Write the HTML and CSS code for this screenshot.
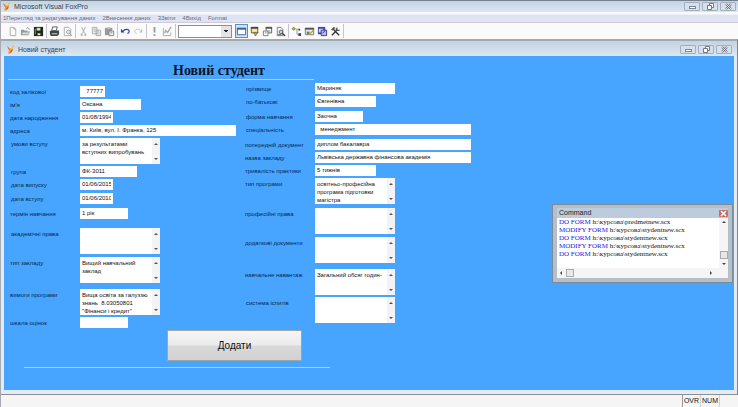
FILE: index.html
```
<!DOCTYPE html>
<html lang="uk">
<head>
<meta charset="utf-8">
<title>Microsoft Visual FoxPro</title>
<link rel="stylesheet" href="styles.css">
</head>
<body>
<svg class="defs" aria-hidden="true">
  <symbol id="fox" viewBox="0 0 9 9"><path d="M1 1l3 3 4-4-2 6-4 3 1-4z" fill="#f5a623"/><path d="M1 1l3 3-1 1zM5 5l2-1-1 3-3 2z" fill="#d9622b"/><path d="M5 3l2-2-1 3z" fill="#ffe34d"/></symbol>
  <symbol id="min" viewBox="0 0 9 7"><rect x="1.5" y="3.5" width="6" height="2" fill="#fff" stroke="#7d8691"/></symbol>
  <symbol id="restore" viewBox="0 0 9 7"><path d="M3.500 2.500v-2h4v4h-2M1.500 2.500h4v4h-4z" fill="#fff" stroke="#6f7782"/></symbol>
  <symbol id="close" viewBox="0 0 9 7"><path d="M2 1l5 5M7 1l-5 5" stroke="#6f7782" stroke-width="2"/><path d="M2 1l5 5M7 1l-5 5" stroke="#fff" stroke-width=".7"/></symbol>
  <symbol id="scroll" viewBox="0 0 8 26"><path d="M2 7l2-2 2 2zM2 20l2 2 2-2z" fill="#555"/></symbol>
</svg>
<div class="app">
  <header class="titlebar app-title">
    <svg class="logo"><use href="#fox"/></svg>
    <h1>Microsoft Visual FoxPro</h1>
    <div class="winbtns">
      <button aria-label="Згорнути"><svg><use href="#min"/></svg></button>
      <button aria-label="Відновити"><svg><use href="#restore"/></svg></button>
      <button aria-label="Закрити"><svg><use href="#close"/></svg></button>
    </div>
  </header>
  <nav class="menu">
    <button>1Перегляд та редагування даних</button>
    <button>2Внесення даних</button>
    <button>3Звіти</button>
    <button>4Вихід</button>
    <button>Format</button>
  </nav>
  <div class="toolbar" role="toolbar">
    <div class="tools">
      <button aria-label="Новий"><svg viewBox="0 0 12 12"><path d="M3.500 1.500h4l2 2v7h-6zM7.500 1.500v2h2" fill="#fff" stroke="#aaa"/></svg></button>
      <button aria-label="Відкрити"><svg viewBox="0 0 12 12"><path d="M1 10V4h3l1 1h3v1h3L9 10z" fill="#999"/><path d="M3 7h7l-1 2H2z" fill="#ddd"/><path d="M7 3c1-2 3-1 3 1" fill="none" stroke="#888"/></svg></button>
      <button aria-label="Зберегти"><svg viewBox="0 0 12 12"><path d="M1 1h10v10H1z" fill="#1d2b16"/><path d="M4 2h4v3H4z" fill="#d5dccb"/><path d="M5 8h3v2H5z" fill="#eee"/><path d="M2 3h1v6H2z" fill="#879750"/></svg></button>
    </div>
    <div class="tools">
      <button aria-label="Друк"><svg viewBox="0 0 12 12"><path d="M2 5h9v4l-2 2H2L1 9V6z" fill="#444"/><path d="M4 1h5L8 5H3z" fill="#fff" stroke="#555"/><path d="M3 8h6v1H3z" fill="#ddd"/></svg></button>
      <button aria-label="Перегляд"><svg viewBox="0 0 12 12"><path d="M2.500 1.500h5l2 2v7h-7z" fill="#fff" stroke="#aaa"/><circle cx="7" cy="6.500" r="2" fill="#eee" stroke="#999"/><path d="M8 8l3 3" stroke="#999"/></svg></button>
    </div>
    <div class="tools">
      <button aria-label="Вирізати"><svg viewBox="0 0 12 12"><path d="M4 1l3 7M8 1L5 8" stroke="#aaa"/><path d="M3.500 8.500h1v2h-1zM7.500 8.500h1v2h-1z" fill="none" stroke="#aaa"/></svg></button>
      <button aria-label="Копіювати"><svg viewBox="0 0 12 12"><path d="M1.500 1.500h5v7h-5zM5.500 4.500h5v6h-5z" fill="#eee" stroke="#aaa"/><path d="M7 6.500h2M7 8.500h2M3 3.500h2M3 5.500h2" stroke="#aaa"/></svg></button>
      <button aria-label="Вставити"><svg viewBox="0 0 12 12"><path d="M1 2h8v8H1z" fill="#999"/><path d="M3 1h4v2H3z" fill="#ccc"/><path d="M5.500 5.500h5v5h-5z" fill="#eee" stroke="#888"/><path d="M7 7.500h2" stroke="#888"/></svg></button>
    </div>
    <div class="tools">
      <button aria-label="Скасувати"><svg viewBox="0 0 12 12"><path d="M3 6c2-3 7-3 7 0 0 1-1 2-2 2" fill="none" stroke="#3b3f94" stroke-width="1.300"/><path d="M1 3v4h4z" fill="#3b3f94"/></svg></button>
      <button aria-label="Повторити"><svg viewBox="0 0 12 12"><path d="M8 5c-2-2-6-2-6 1 0 1 1 2 2 2" fill="none" stroke="#bbb"/><path d="M10 3v4H7z" fill="#bbb"/></svg></button>
    </div>
    <div class="tools">
      <button aria-label="Виконати"><svg viewBox="0 0 12 12"><path d="M5 1h2v6H5zM5 9h2v2H5z" fill="#999"/></svg></button>
      <button aria-label="Змінити"><svg viewBox="0 0 12 12"><path d="M1.500 2v8.500h8V7" fill="none" stroke="#aaa"/><path d="M3 8l1-3 2 2 4-6" fill="none" stroke="#aaa" stroke-width="1.500"/></svg></button>
    </div>
    <select class="dblist" aria-label="База даних"><option></option></select>
    <div class="tools">
      <button class="on" aria-label="Командне вікно"><svg viewBox="0 0 12 12"><path d="M1.500 2.500h9v7h-9z" fill="#fff" stroke="#35609a"/><path d="M1 2h10v2H1z" fill="#35609a"/></svg></button>
      <button aria-label="Сеанс даних"><svg viewBox="0 0 12 12"><path d="M2.500 1.500h7v6h-7z" fill="#ffe97a" stroke="#555"/><path d="M2 1h8v2H2z" fill="#34407f"/><path d="M5 7h5l-3 4z" fill="#c4a12b" stroke="#555" stroke-width=".6"/></svg></button>
      <button aria-label="Властивості"><svg viewBox="0 0 12 12"><path d="M4.500 1.500h6v6h-6z" fill="#fff" stroke="#555"/><path d="M4 1h7v2H4z" fill="#555"/><path d="M1.500 5.500h5v5h-5z" fill="#fff" stroke="#777"/><path d="M6 5.500h3M3 7.500h2" stroke="#777"/></svg></button>
      <button aria-label="Огляд документа"><svg viewBox="0 0 12 12"><path d="M2.500 1.500h4l2 2v7h-6z" fill="#fff" stroke="#777"/><circle cx="6.500" cy="6.500" r="2" fill="#bde" stroke="#555"/><path d="M8 8l3 3" stroke="#444" stroke-width="1.500"/><path d="M3 9.500h4" stroke="#555"/></svg></button>
    </div>
    <div class="tools">
      <button aria-label="Оглядач класів"><svg viewBox="0 0 12 12"><path d="M1 3l2-2 2 2-2 2z" fill="#b5b02a" stroke="#555" stroke-width=".5"/><path d="M5 3.500h3M6.500 4v5H8" fill="none" stroke="#999"/><path d="M8 3h2v2H8zM8 8h3v3H8z" fill="#34407f"/></svg></button>
      <button aria-label="Оглядач об’єктів"><svg viewBox="0 0 12 12"><path d="M1.500 2.500h9v7h-9z" fill="#eee" stroke="#777"/><path d="M1 2h10v2H1z" fill="#555"/><path d="M3 6h3v3H3z" fill="#5a8a57"/><path d="M6 8l4-4 1 1-4 4z" fill="#c99c21"/></svg></button>
      <button aria-label="Форма"><svg viewBox="0 0 12 12"><path d="M1 1h8v8H1z" fill="#4545a5"/><path d="M2 3h5v4H2z" fill="#d7d7f5"/><path d="M4.500 4.500h6v6h-6z" fill="#b9b9e8" stroke="#34348d"/><path d="M6 8l3-3" stroke="#34348d"/></svg></button>
      <button aria-label="Інструменти"><svg viewBox="0 0 12 12"><path d="M2 10l6-6M3 3l7 7" stroke="#333" stroke-width="1.500"/><path d="M1 4l3-3 2 1-3 3zM8 1v3h3l-1 1.500H7L6 3z" fill="#555"/></svg></button>
    </div>
  </div>

  <main class="window">
    <div class="titlebar form-title">
      <svg class="logo"><use href="#fox"/></svg>
      <span>Новий студент</span>
      <div class="winbtns">
        <button aria-label="Згорнути"><svg><use href="#min"/></svg></button>
        <button aria-label="Відновити"><svg><use href="#restore"/></svg></button>
        <button aria-label="Закрити"><svg><use href="#close"/></svg></button>
      </div>
    </div>
    <form class="form">
      <h2>Новий студент</h2>
      <div class="columns">
        <div class="col left">
          <div class="row"><label for="a1">код залікової</label><input id="a1" class="w25 num" value="77777"></div>
          <div class="row"><label for="a2">ім'я</label><input id="a2" class="w61" value="Оксана"></div>
          <div class="row"><label for="a3">дата народження</label><input id="a3" class="w33" value="01/08/1994"></div>
          <div class="row"><label for="a4">адреса</label><input id="a4" class="w156" value="м. Київ, вул. І. Франка, 125"></div>
          <div class="row in"><label for="a5">умови вступу</label><div class="memo"><textarea id="a5">за результатами
вступних випробувань</textarea><svg><use href="#scroll"/></svg></div></div>
          <div class="row in"><label for="a6">група</label><input id="a6" class="w57" value="ФК-3011"></div>
          <div class="row in"><label for="a7">дата випуску</label><input id="a7" class="w33" value="01/06/2015"></div>
          <div class="row in g3"><label for="a8">дата вступу</label><input id="a8" class="w33" value="01/06/2010"></div>
          <div class="row g4"><label for="a9">термін навчання</label><input id="a9" class="w48" value="1 рік"></div>
          <div class="row in g9"><label for="a10">академічні права</label><div class="memo"><textarea id="a10"></textarea><svg><use href="#scroll"/></svg></div></div>
          <div class="row g3"><label for="a11">тип закладу</label><div class="memo"><textarea id="a11">Вищий навчальний
заклад</textarea><svg><use href="#scroll"/></svg></div></div>
          <div class="row g6"><label for="a12">вимоги програми</label><div class="memo"><textarea id="a12">Вища освіта за галуззю
знань  8.03050801
"Фінанси і кредит"</textarea><svg><use href="#scroll"/></svg></div></div>
          <div class="row"><label for="a13">шкала оцінок</label><input id="a13" class="w48"></div>
        </div>
        <div class="col right">
          <div class="row in"><label for="b1">прізвище</label><input id="b1" class="w80" value="Мариняк"></div>
          <div class="row in"><label for="b2">по-батькові</label><input id="b2" class="w61" value="Євгенівна"></div>
          <div class="row in g4"><label for="b3">форма навчання</label><input id="b3" class="w48" value="Заочна"></div>
          <div class="row in"><label for="b4">спеціальність</label><input id="b4" class="w156" value="  менеджмент"></div>
          <div class="row g4"><label for="b5">попередній документ</label><input id="b5" class="w156" value="диплом бакалавра"></div>
          <div class="row"><label for="b6">назва закладу</label><input id="b6" class="w156" value="Львівська державна фінансова академія"></div>
          <div class="row"><label for="b7">тривалість практики</label><input id="b7" class="w61" value="5 тижнів"></div>
          <div class="row"><label for="b8">тип програми</label><div class="memo"><textarea id="b8">освітньо-професійна
програма підготовки
магістра</textarea><svg><use href="#scroll"/></svg></div></div>
          <div class="row g4"><label for="b9">професійні права</label><div class="memo"><textarea id="b9"></textarea><svg><use href="#scroll"/></svg></div></div>
          <div class="row g3"><label for="b10">додаткові документи</label><div class="memo"><textarea id="b10"></textarea><svg><use href="#scroll"/></svg></div></div>
          <div class="row g6"><label for="b11">навчальне навантаж</label><div class="memo"><textarea id="b11">Загальний обсяг годин-</textarea><svg><use href="#scroll"/></svg></div></div>
          <div class="row in"><label for="b12">система іспитів</label><div class="memo"><textarea id="b12"></textarea><svg><use href="#scroll"/></svg></div></div>
        </div>
      </div>
      <button type="button" class="add">Додати</button>
      <hr>
    </form>
    <section class="command">
      <div class="cmd-title"><span>Command</span><button aria-label="Закрити"><svg viewBox="0 0 9 7"><path d="M2 1l5 5M7 1l-5 5" stroke="#fff" stroke-width="1.500"/></svg></button></div>
      <div class="cmd-body">
        <div class="cmd-text">
          <p><b>DO FORM</b> h:\курсова\predmetnew.scx</p>
          <p><b>MODIFY FORM</b> h:\курсова\stydentnew.scx</p>
          <p><b>DO FORM</b> h:\курсова\stydentnew.scx</p>
          <p><b>MODIFY FORM</b> h:\курсова\stydentnew.scx</p>
          <p><b>DO FORM</b> h:\курсова\stydentnew.scx</p>
        </div>
        <div class="vbar"><svg viewBox="0 0 8 5"><path d="M2 4l2-2 2 2z"/></svg><i></i><svg viewBox="0 0 8 5"><path d="M2 1l2 2 2-2z"/></svg></div>
        <div class="hbar"><svg viewBox="0 0 5 8"><path d="M3 2L1 4l2 2z"/></svg><i></i><svg class="end" viewBox="0 0 5 8"><path d="M1 2l2 2-2 2z"/></svg></div>
      </div>
    </section>
  </main>
  <footer class="status"><span>OVR</span><span>NUM</span></footer>
</div>
</body>
</html>
```
FILE: styles.css
```
* { box-sizing: border-box; }
body { margin: 0; font-family: "Liberation Sans", Arial, sans-serif; font-size: 6px; color: #111; }
h1, h2, p { margin: 0; font-weight: normal; }
button { font: inherit; color: inherit; padding: 0; border: 0; background: none; }
svg { display: block; }
.defs { position: absolute; width: 0; height: 0; }
.app { display: flex; flex-direction: column; min-height: 100vh; background: #f5f5f5; border-left: 1px solid #a9a9b2; }

.titlebar { display: flex; align-items: center; gap: 3px; font-size: 7px; color: #35404c; }
.titlebar > h1, .titlebar > span { flex: 1; }
.logo { width: 9px; height: 9px; }
.app-title { height: 12px; padding: 0 2px 0 1px; border-top: 1px solid #75808d; background: linear-gradient(#c4d4e5, #dae6f2); }
.app-title h1 { font-size: 7px; line-height: 11px; }
.winbtns { display: flex; gap: 2px; }
.winbtns button { width: 16px; height: 9px; display: grid; place-items: center; border: 1px solid #a2afbf; border-radius: 1px; background: #d5e0ec; }
.winbtns svg { width: 9px; height: 7px; }

.menu { display: flex; gap: 7px; height: 11px; padding: 2px 2px 0; background: linear-gradient(#fafbfe 2px, #dfe4f4 3px); border-bottom: 1px solid #cfcbd6; font-size: 6px; line-height: 8px; color: #666b7a; }

.toolbar { display: flex; align-items: center; height: 16px; padding-left: 5px; background: #fafafa; }
.tools { display: flex; border-right: 1px solid #c5c5ca; margin-right: 1px; padding-right: 1px; }
.tools button { width: 13px; height: 14px; display: grid; place-items: center; }
.tools svg { width: 11px; height: 11px; }
.tools .on { border: 1px solid #5590cf; background: #cfe4fa; }
.dblist { appearance: none; width: 54px; height: 13px; margin: 0 3px 0 1px; border: 1px solid #8e8e8e; border-radius: 0; font-size: 6px;
  background: conic-gradient(from 315deg at 50% 100%, #222 90deg, transparent 0) right 3px center / 4px 2px no-repeat, linear-gradient(#e4e4e4, #e4e4e4) right / 10px 100% no-repeat, #fff; }

.window { position: relative; flex: 1; display: flex; flex-direction: column; border-top: 2px solid #a3a9b0; border-right: 1px solid #80848c; border-bottom: 1px solid #8d8f96; background: #e2ebf6; padding: 0 3px 4px; }
.form-title { height: 15px; margin: 0 -3px; padding: 1px 5px 0 5px; background: linear-gradient(#c4d3e2, #dce8f3); }
.form { flex: 1; background: #47a5ff; padding: 7px 4px 16px; }
h2 { width: 306px; height: 17px; padding-left: 165px; border-bottom: 1px solid #a9d3f5; font: bold 14px/16px "Liberation Serif", serif; color: #0a1430; }
.columns { display: flex; }
.col { display: flex; flex-direction: column; }
.left { padding-top: 6px; width: 236px; }
.right { padding-top: 3px; }
.row { display: flex; align-items: flex-start; margin-top: 2px; }
.col .row:first-child { margin-top: 0; }
.row.g3 { margin-top: 3px; }
.row.g4 { margin-top: 4px; }
.row.g6 { margin-top: 6px; }
.row.g9 { margin-top: 9px; }
.row label { flex: none; width: 72px; height: 11px; padding-left: 2px; line-height: 12px; white-space: nowrap; color: #06294f; }
.row.in label { padding-left: 3px; }
.right .row label { width: 71px; padding-left: 1px; }
.right .row.in label { padding-left: 2px; }
input, textarea { display: block; font: inherit; color: #111; border: 0; border-radius: 0; margin: 0; background: #fff; }
input { height: 11px; padding: 0 2px; line-height: 11px; }
.num { text-align: right; }
.w25 { width: 25px; }
.w33 { width: 33px; }
.w48 { width: 48px; }
.w57 { width: 57px; }
.w61 { width: 61px; }
.w80 { width: 80px; }
.w156 { width: 156px; }
.memo { display: flex; width: 80px; height: 26px; background: #fff; }
.memo textarea { flex: 1; min-width: 0; height: 26px; padding: 2px 0 0 2px; line-height: 8px; resize: none; overflow: hidden; white-space: pre; }
.memo svg { flex: none; width: 8px; height: 26px; background: #f3f3f5; }
.add { display: block; width: 135px; height: 31px; margin: 2px 0 6px 159px; border: 1px solid #9fa4aa; background: linear-gradient(#f6f6f6, #ebebeb 48%, #d9d9d9 52%, #d2d2d2); font-size: 10px; color: #111; }
hr { width: 306px; margin: 0 0 0 16px; border: 0; border-top: 1px solid #a9d3f5; }

.command { position: absolute; right: 4px; top: 163px; width: 181px; padding: 3px 4px 4px; background: #b4bfca; border: 1px solid #7d8b99; }
.cmd-title { display: flex; justify-content: space-between; align-items: center; height: 10px; padding-left: 2px; font-size: 7px; line-height: 10px; color: #222; background: #bcccdd; }
.cmd-title button { width: 9px; height: 7px; background: #cf6a62; border-radius: 1px; }
.cmd-body { display: grid; grid-template: 50px 10px / 1fr 9px; background: #fff; }
.cmd-text { padding: 0 2px; font: 7px/8px "Liberation Serif", serif; white-space: nowrap; }
.cmd-text b { font-weight: normal; color: #2323e0; }
.vbar { display: flex; flex-direction: column; align-items: center; padding: 1px 0; background: #f5f5f5; }
.vbar svg { width: 8px; height: 5px; fill: #444; }
.vbar i { width: 8px; height: 8px; margin: auto 0 3px; border: 1px solid #aaa; background: #e8e8e8; }
.hbar { display: flex; align-items: center; grid-column: 1 / 3; padding: 0 14px 0 2px; background: #f5f5f5; }
.hbar svg { width: 5px; height: 8px; fill: #444; }
.hbar i { width: 8px; height: 8px; margin-left: 2px; border: 1px solid #aaa; background: #e8e8e8; }
.hbar .end { margin-left: auto; }

.status { display: flex; justify-content: flex-end; height: 12px; padding-right: 18px; font-size: 7px; line-height: 12px; }
.status span { padding: 0 1px; border-right: 1px solid #d0d0d0; }
.status span:first-child { border-left: 1px solid #999; }
```
